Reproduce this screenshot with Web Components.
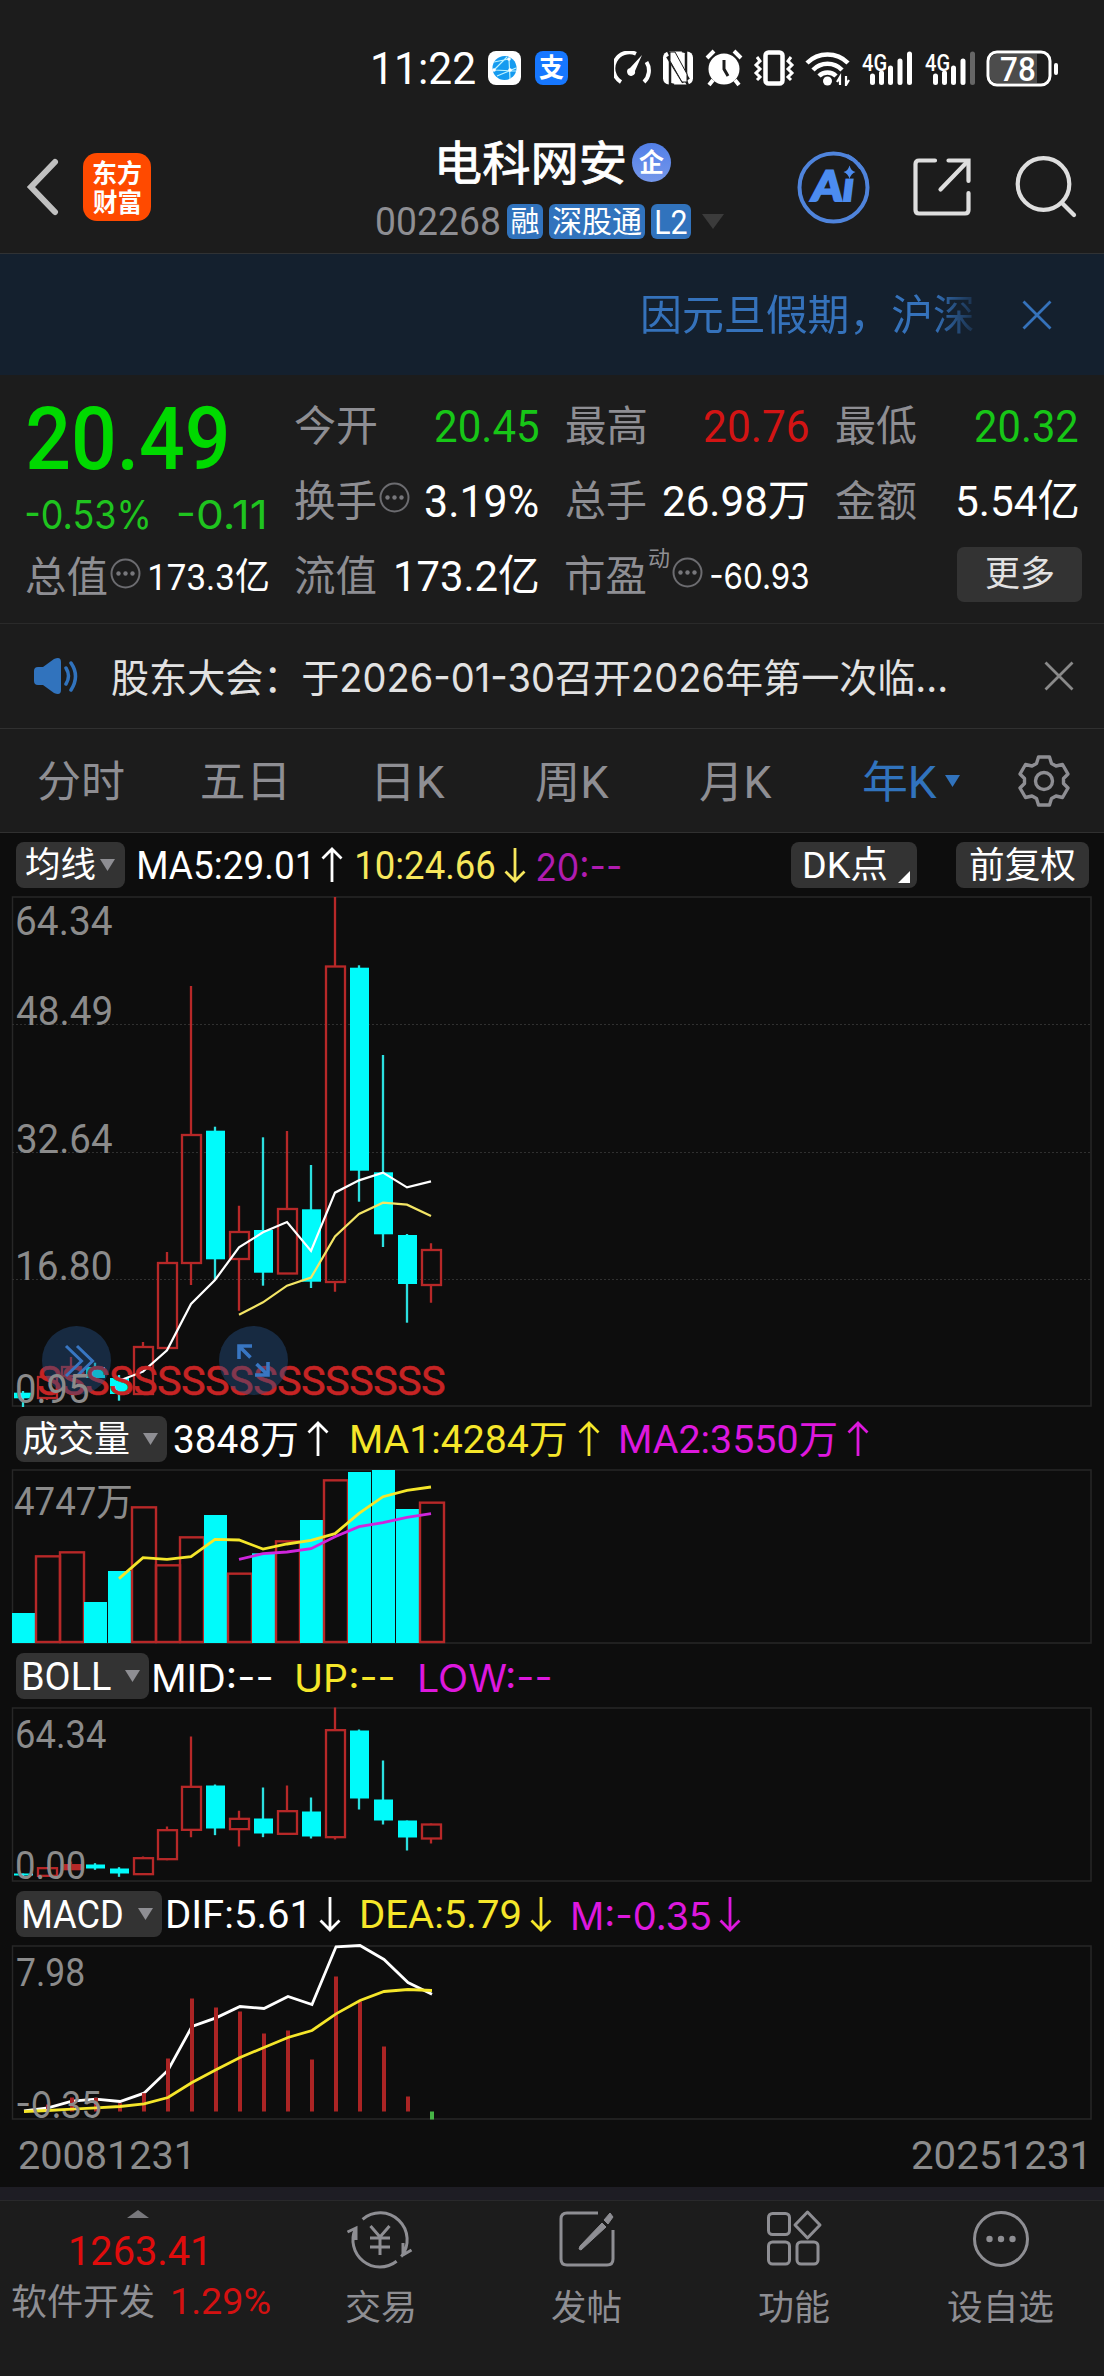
<!DOCTYPE html>
<html lang="zh-CN">
<head>
<meta charset="utf-8">
<title>电科网安 002268</title>
<style>
html,body{margin:0;padding:0;background:#1c1c1c}
body{width:1104px;height:2376px;overflow:hidden;font-family:Roboto,"Noto Sans CJK SC",sans-serif;color:#fff}
</style>
</head>
<body>
<stock-app></stock-app>
<script>
const meter = document.createElement('canvas').getContext('2d');

/* A run of text whose drawn width is given by w, size by s, leading margin by m. */
class FitText extends HTMLElement {
  connectedCallback() {
    if (this.shadowRoot) return;
    const g = (n, d) => this.getAttribute(n) || d;
    const r = this.attachShadow({mode: 'open'});
    const size = g('s', '42'), wt = g('wt', '400'), text = this.textContent;
    const fam = g('f', 'Roboto') + ', "Noto Sans CJK SC", sans-serif';
    meter.font = `${wt} ${size}px ${fam}`;
    const b = meter.measureText(text);
    const ink = b.actualBoundingBoxRight + b.actualBoundingBoxLeft;
    const w = parseFloat(g('w', ink)), k = w / ink;
    r.innerHTML = `<style>:host{display:block;flex:none;width:${w}px;margin-left:${g('m', 0)}px;font:${wt} ${size}px/1 ${fam};white-space:pre;color:${g('c', 'inherit')}}
      span{display:inline-block;vertical-align:top;transform-origin:0 50%;transform:translate(${b.actualBoundingBoxLeft * k}px,var(--dy,1px)) scaleX(${k})}</style><span><slot></slot></span>`;
  }
}
customElements.define('fit-text', FitText);

const define = (name, html) => customElements.define(name, class extends HTMLElement {
  connectedCallback() {
    if (this.shadowRoot) return;
    this.attachShadow({mode: 'open'}).innerHTML = typeof html === 'function' ? html(this) : html;
  }
});

define('arrow-mark', el => `<style>:host{display:block;flex:none;width:22px;height:36px;margin-left:${el.getAttribute('m')}px}svg{display:block}</style>
<svg width="22" height="36" viewBox="0 0 22 36" fill="none" stroke="currentColor" stroke-width="2.8"><path d="${el.hasAttribute('down') ? 'M11 1V34M1.5 24.500L11 34L20.500 24.500' : 'M11 35V2M1.500 11.500L11 2L20.500 11.500'}"/></svg>`);

define('info-dot', `<style>:host{display:block;flex:none;width:31px;height:31px}svg{display:block}</style>
<svg width="31" height="31"><circle cx="15.500" cy="15.500" r="14" fill="none" stroke="#6c6c70" stroke-width="2"/><g fill="#77777b"><circle cx="8.500" cy="15.500" r="2.200"/><circle cx="15.500" cy="15.500" r="2.200"/><circle cx="22.500" cy="15.500" r="2.200"/></g></svg>`);

define('close-mark', el => `<style>:host{display:block;flex:none;width:30px;height:30px;margin-left:${el.getAttribute('m')}px}svg{display:block}</style>
<svg width="30" height="30" stroke="currentColor" stroke-width="2.800"><path d="M1.500 1.500L28.500 28.500M28.500 1.500L1.500 28.500"/></svg>`);

define('status-bar', `<style>:host{display:flex;height:105px;box-sizing:border-box;padding:31px 0 0 373px;align-items:center;--dy:.5px}svg{display:block;flex:none}</style>
<fit-text s="44" w="102.500">11:22</fit-text>
<svg style="margin-left:12.500px" width="33" height="34"><rect width="33" height="34" rx="8" fill="#fff"/><circle cx="16.500" cy="17" r="12" fill="#159bf0"/><path d="M6 11L21 8M21 8L22 28M6 19L28 20M6 19L19 6M9 25L28 17" stroke="#bdf3ff" stroke-width="1.200" fill="none"/><circle cx="21" cy="8" r="1.800" fill="#fff"/><circle cx="6" cy="19" r="1.800" fill="#fff"/><circle cx="22" cy="19" r="1.800" fill="#fff"/></svg>
<div style="margin-left:14px;width:33px;height:34px;border-radius:8px;background:#1677ff;display:flex;align-items:center;justify-content:center;box-sizing:border-box;padding-bottom:3px;flex:none"><fit-text s="26" wt="700" w="25">支</fit-text></div>
<svg style="margin-left:46px" width="37" height="34" fill="none" stroke="#fff"><path d="M7 31A16 16 0 0 1 22 2.800M32.500 11A16 16 0 0 1 30 31" stroke-width="4"/><path d="M28 4L21 20A4 4 0 1 1 16 17Z" fill="#fff" stroke="none"/></svg>
<svg style="margin-left:11px" width="32" height="34" fill="none" stroke="#fff"><rect x="1" y=".500" width="30" height="33" rx="6" fill="#fff" stroke="none"/><path d="M6 0L8 4V33L12 34M26 34L24 30V1L20 0" stroke="#1c1c1c" stroke-width="2.500"/><path d="M8 4L24 30" stroke="#1c1c1c" stroke-width="9"/><path d="M8 1L13 1L25 23V31L20 31L8 10Z" fill="#fff" stroke="#1c1c1c" stroke-width="1"/></svg>
<svg style="margin-left:11px" width="38" height="38" fill="none" stroke="#fff"><circle cx="19" cy="20" r="15.500" fill="#fff" stroke="none"/><path d="M2 9L9 2M36 9L29 2M8 31L4 36M30 31L34 36" stroke-width="4"/><path d="M19 11V20L23 27" stroke="#1c1c1c" stroke-width="3"/></svg>
<svg style="margin-left:10px" width="42" height="36" fill="none" stroke="#fff"><rect x="12.500" y="2.500" width="17" height="31" rx="3" stroke-width="4.500"/><path d="M4 7L7 11L3 15L7 19L3 23L7 27L4 30M38 7L35 11L39 15L35 19L39 23L35 27L38 30" stroke-width="3"/></svg>
<svg style="margin-left:10px" width="46" height="36" fill="none" stroke="#fff" stroke-width="4.500"><path d="M2 13A29 29 0 0 1 43 13M8 20A20 20 0 0 1 37 20M14 26A12 12 0 0 1 31 26"/><circle cx="22.500" cy="31" r="4.500" fill="#fff" stroke="none"/><path d="M32 32L35 27V35M41 26V35L44 30" stroke-width="2.200"/></svg>
${[0, 1].map(k => `<div style="margin-left:${k ? 12 : 11}px;width:51px;height:36px;flex:none;display:flex;position:relative"><fit-text s="24" wt="500" w="24">4G</fit-text><svg style="position:absolute;left:0;top:0" width="51" height="36" stroke="#fff" stroke-width="5" stroke-linecap="round"><path d="M10.500 26V32.500M19.500 23V32.500M28.500 18V32.500M38 11V32.500"/><path d="M47.500 4V32.500" ${k ? 'stroke="#666"' : ''}/></svg></div>`).join('')}
<div style="margin-left:10px;width:73px;height:37px;flex:none;position:relative;display:flex;align-items:center"><svg style="position:absolute;left:0;top:0" width="75" height="37"><rect x="2" y="2" width="62" height="33" rx="9" fill="#1c1c1c" stroke="#fff" stroke-width="3"/><path d="M10 4H51V33H10A6 6 0 0 1 4 27V10A6 6 0 0 1 10 4" fill="#4c4c4c"/><rect x="68" y="13" width="4" height="12" rx="2" fill="#fff"/></svg><fit-text style="position:relative" s="33" wt="500" w="34" m="15">78</fit-text></div>`);

define('app-header', `<style>:host{display:flex;height:149px;box-sizing:border-box;padding:16px 0 0 26px;align-items:center;border-bottom:1px solid #303234;--dy:.5px}
svg{display:block;flex:none}.logo{margin-left:23px;width:68px;height:68px;flex:none;border-radius:14px;background:#ff4a00;display:flex;flex-direction:column;align-items:center;justify-content:center;gap:3px}
.mid{margin:9px 0 0 226px;width:350px;flex:none}.r{display:flex;align-items:center;height:59px}
.ent{margin-left:8px;width:39px;height:39px;border-radius:50%;background:linear-gradient(#527fe8,#7597ea);display:flex;align-items:center;justify-content:center}
.tag{height:35px;border-radius:6px;background:#3173bd;display:flex;align-items:center;justify-content:center;margin-left:6px}</style>
<svg width="34" height="58"><path d="M29 4L5 29L29 54" fill="none" stroke="#c0c0c0" stroke-width="6" stroke-linecap="round"/></svg>
<div class="logo"><fit-text s="26" wt="700" w="48">东方</fit-text><fit-text s="26" wt="700" w="48">财富</fit-text></div>
<div class="mid"><div class="r"><fit-text s="47" w="185" m="62" style="-webkit-text-stroke:.8px #fff">电科网安</fit-text><div class="ent"><fit-text s="26" wt="700" w="25">企</fit-text></div></div>
<div class="r"><fit-text s="39" w="122" c="#8e8e93">002268</fit-text><div class="tag" style="width:36px;margin-left:8px"><fit-text s="29" w="27">融</fit-text></div><div class="tag" style="width:96px"><fit-text s="30" w="89">深股通</fit-text></div><div class="tag" style="width:40px"><fit-text s="33" w="31">L2</fit-text></div><svg style="margin-left:11px" width="22" height="15"><path d="M0 0H22L11 15Z" fill="#3b3b3b"/></svg></div></div>
<svg style="margin-left:69.500px" width="73" height="73"><circle cx="36.500" cy="36.500" r="34" fill="none" stroke="#4f84dc" stroke-width="4"/><text transform="translate(13.500 50) skewX(-7)" textLength="42" lengthAdjust="spacingAndGlyphs" font-family="Lato" font-weight="900" font-size="42" fill="#4c8cf0" stroke="#4c8cf0" stroke-width="2">Ai</text><rect x="42" y="10" width="20" height="17.500" fill="#1c1c1c"/><path d="M52.500 15.500Q54 21 58.500 22Q54 23.500 52.500 29Q51 23.500 46.500 22Q51 21 52.500 15.500Z" fill="#4c8cf0" transform="translate(0 -1)"/><path d="M50 4.700A34 34 0 0 1 64 17" fill="none" stroke="#4f84dc" stroke-width="4"/></svg>
<svg style="margin-left:41px" width="62" height="62" fill="none" stroke="#dedede" stroke-width="4.200"><path d="M24 4.500H8Q4.500 4.500 4.500 8V54Q4.500 57.500 8 57.500H54Q57.500 57.500 57.500 54V37M37.500 4.500H57.500V25" stroke-linecap="round"/><path d="M29.500 33.500L56 6" stroke-linecap="round"/></svg>
<svg style="margin-left:41px" width="66" height="62" fill="none" stroke="#dedede" stroke-width="4.200" stroke-linecap="round"><circle cx="29.500" cy="28" r="25.800"/><path d="M48 47L60 59"/></svg>`);

define('marquee-bar', `<style>:host{display:flex;align-items:center;height:121px;background:#14202e;color:#3572bb;padding-left:643px;box-sizing:border-box}
.t{-webkit-mask-image:linear-gradient(90deg,#000 290px,transparent 342px);mask-image:linear-gradient(90deg,#000 290px,transparent 342px);width:342px}</style>
<div class="t"><fit-text s="42" w="330">因元旦假期，沪深</fit-text></div><close-mark m="37"></close-mark>`);

define('quote-panel', `<style>:host{display:flex;height:249px;box-sizing:border-box;padding-top:12px;border-bottom:1px solid #2a2a2a;--dy:2px}
.c1{width:269px;margin-left:26px;flex:none}.c{width:243px;flex:none}.r{display:flex;align-items:center;height:75px}.c .r{justify-content:space-between}.l{display:flex;align-items:center;color:#8e8e93;gap:3px}
.b{width:125px;height:55px;border-radius:7px;background:#333;display:flex;align-items:center;justify-content:center;margin-right:-4px;--dy:0px}</style>
<div class="c1"><div class="r" style="height:100px"><fit-text s="88" wt="500" w="198" m="2" c="#00d900">20.49</fit-text></div>
<div class="r" style="height:51px;color:#1fc41f"><fit-text s="40" f="Inter" w="122" m="0">-0.53%</fit-text><fit-text s="40" f="Inter" w="86" m="30">-0.11</fit-text></div>
<div class="r"><span class="l"><fit-text w="81">总值</fit-text><info-dot style="margin-bottom:4px"></info-dot></span><fit-text s="37" w="118" m="9">173.3亿</fit-text></div></div>
<div class="c"><div class="r"><span class="l"><fit-text w="81">今开</fit-text></span><fit-text s="44" w="102" c="#17c617">20.45</fit-text></div>
<div class="r"><span class="l"><fit-text w="81">换手</fit-text><info-dot style="margin-bottom:4px"></info-dot></span><fit-text s="44" w="112">3.19%</fit-text></div>
<div class="r"><span class="l"><fit-text w="81">流值</fit-text></span><fit-text s="43" w="142">173.2亿</fit-text></div></div>
<div class="c" style="margin-left:28px;width:242px"><div class="r"><span class="l"><fit-text w="80">最高</fit-text></span><fit-text s="44" w="103" c="#d31414">20.76</fit-text></div>
<div class="r"><span class="l"><fit-text w="80">总手</fit-text></span><fit-text s="43" w="145">26.98万</fit-text></div>
<div class="r"><span class="l"><fit-text w="80">市盈</fit-text><fit-text s="22" w="20" style="margin-bottom:36px">动</fit-text><info-dot style="margin-bottom:4px"></info-dot></span><fit-text s="35" f="Inter" w="97">-60.93</fit-text></div></div>
<div class="c" style="margin-left:28px;width:242px"><div class="r"><span class="l"><fit-text w="80">最低</fit-text></span><fit-text s="44" w="102" c="#17c617">20.32</fit-text></div>
<div class="r"><span class="l"><fit-text w="80">金额</fit-text></span><fit-text s="43" w="120">5.54亿</fit-text></div>
<div class="r"><span></span><div class="b"><fit-text s="35" w="68" c="#e2e2e2">更多</fit-text></div></div></div>`);

define('news-bar', `<style>:host{display:flex;height:105px;box-sizing:border-box;align-items:center;border-bottom:1px solid #303030;padding-left:33px;color:#e2e2e2}svg{display:block;flex:none}</style>
<svg width="46" height="38"><path d="M1 14Q1 10 5 10H10L21 2Q28 -1 28 5V33Q28 39 21 36L10 28H5Q1 28 1 24Z" fill="#3173bd"/><path d="M33 11Q38 19 33 27M38 6Q47 19 38 33" fill="none" stroke="#3173bd" stroke-width="3.500" stroke-linecap="round"/></svg>
<fit-text s="39" f="Inter" w="834" m="33">股东大会：于2026-01-30召开2026年第一次临...</fit-text><close-mark m="98" style="color:#8a8a8a"></close-mark>`);

define('period-tabs', `<style>:host{display:flex;height:104px;box-sizing:border-box;align-items:center;border-bottom:1px solid #303030;color:#8e8e93;--dy:2px}svg{display:block;flex:none}</style>
<fit-text s="43" w="86" m="38">分时</fit-text><fit-text s="43" w="82" m="78">五日</fit-text><fit-text s="44" w="68" m="93">日K</fit-text><fit-text s="44" w="73" m="91">周K</fit-text><fit-text s="44" w="72" m="91">月K</fit-text><fit-text s="44" w="73" m="92" c="#3173bd">年K</fit-text>
<svg style="margin-left:8px" width="15" height="12"><path d="M0 0H15L7.500 12Z" fill="#3173bd"/></svg>
<svg style="margin-left:57px" width="54" height="54" viewBox="-27 -27 54 54" fill="none" stroke="#8e8e93" stroke-width="3.400" stroke-linejoin="round"><path d="M-5.500 -24H5.500L7.500 -17.500L12 -15L18.500 -16.500L24 -7L19.500 -2.500V2.500L24 7L18.500 16.500L12 15L7.500 17.500L5.500 24H-5.500L-7.500 17.500L-12 15L-18.500 16.500L-24 7L-19.500 2.500V-2.500L-24 -7L-18.500 -16.500L-12 -15L-7.500 -17.500Z"/><circle r="8.500"/></svg>`);

define('pick-button', el => `<style>:host{display:flex;flex:none;align-items:center;width:${el.getAttribute('w')}px;height:46px;box-sizing:border-box;margin-left:${el.getAttribute('m')}px;padding-left:${el.getAttribute('p')}px;border-radius:8px;background:#333}svg{display:block;margin-left:${el.getAttribute('g')}px}</style><slot></slot>${el.hasAttribute('g') ? '<svg width="15" height="12"><path d="M0 0H15L7.500 12Z" fill="#8e8e93"/></svg>' : ''}`);

const RED = '#b72828', CY = '#00fbfb', WT = '#fff', YL = '#f5e62a', MG = '#dd18dd';
const cx = i => 23 + 24 * i - 12;
/* Rows: kind, body top, body bottom, wick top, wick bottom. */
const candles = (rows) => rows.map((r, i) => {
  const x = cx(i), [k, a, b, t, u] = r;
  return k === 'c'
    ? `<path d="M${x} ${t}V${u}" stroke="#2be0e0" stroke-width="2.300"/><rect x="${x - 9}" y="${a}" width="19" height="${b - a}" fill="${CY}"/>`
    : `<path d="M${x} ${t}V${a}M${x} ${b}V${u}" stroke="${RED}" stroke-width="2.300"/><rect x="${x - 9}" y="${a}" width="19" height="${b - a}" fill="none" stroke="${RED}" stroke-width="2.300"/>`;
}).join('');
const line = (start, ys, dx, c, w) => `<polyline fill="none" stroke="${c}" stroke-width="${w}" points="${ys.map((y, j) => (cx(start + j) + dx) + ',' + y).join(' ')}"/>`;
const shift = (o, rows) => rows.map(r => [r[0], ...r.slice(1).map(v => v - o)]);
const z = (o, ys) => ys.map(v => o + v / 3);

const frame = (h, inner, labels) => `<style>:host{display:block;position:relative;width:1080px;height:${h}px;margin-left:12px;box-sizing:border-box;--dy:2px}svg{display:block;overflow:visible}
.l{position:absolute;left:0;top:0;color:#8b8b8b}.l fit-text{position:absolute;transform:translateY(-50%)}</style>
<svg width="1080" height="${h}"><rect x=".500" y="1" width="1078.500" height="${h - 2}" fill="none" stroke="#272727" stroke-width="1.500"/>${inner}</svg><div class="l">${labels}</div>`;
const lab = (x, y, w, t, s = 40, f = 'Roboto') => `<fit-text style="left:${x}px;top:${y}px" s="${s}" f="${f}" w="${w}">${t}</fit-text>`;

define('price-chart', () => frame(511,
  `<g stroke="#303030" stroke-width="1" stroke-dasharray="2 2"><path d="M0 128.500H1079M0 256.500H1079M0 383.500H1079"/></g>` +
  candles(shift(896, [
    ['c', 1392.7, 1398.3, 1391, 1407], ['r', 1377, 1398, 1376, 1400], ['r', 1367, 1376, 1357, 1376], ['c', 1367, 1378, 1362.7, 1378], ['c', 1378, 1394, 1375, 1400.7],
    ['r', 1347, 1394, 1342, 1394], ['r', 1263, 1348, 1252, 1350], ['r', 1135, 1263, 986, 1285], ['c', 1130.7, 1259.3, 1126.7, 1280], ['r', 1232, 1259, 1205.7, 1310.7],
    ['c', 1230, 1272.7, 1137.3, 1285.7], ['r', 1209, 1273.5, 1131, 1273.5], ['c', 1209.3, 1281.7, 1165, 1288], ['r', 966.5, 1282, 897, 1291.7], ['c', 967.7, 1170.7, 965.3, 1201.7],
    ['c', 1172.3, 1234.3, 1055, 1247], ['c', 1235, 1284, 1234, 1322.7], ['r', 1250, 1285, 1243.3, 1302.7]])) +
  line(4, z(274, [632, 605, 541, 402, 330, 232, 187, 156, 243, 68, 31, 8, 52, 34]), 0, WT, 2.2) +
  line(9, z(274, [434, 397, 347, 323, 199, 132, 98, 104, 138]), 0, '#f3e565', 2.2) +
  `<text y="498.500" font-family="Roboto" font-size="41" fill="#c62424" text-anchor="middle" stroke="#c62424" stroke-width=".600">${Array.from({length: 17}, (_, i) => `<tspan x="${37.3 + 24 * i}">S</tspan>`).join('')}</text>
  <g fill="rgba(38,83,138,.42)"><circle cx="64.500" cy="464.500" r="34.500"/><circle cx="241.500" cy="464.500" r="34.500"/></g>
  <g fill="none" stroke="#3876c2" stroke-width="3"><path d="M54 450L69.500 465L54 480M65 450L80.500 465L65 480"/><path stroke-width="3.600" d="M227 463V450H240M227 450L238.500 461.500M256 466V479H243M256 479L244.500 468"/></g>`,
  lab(4.5, 24, 95, '64.34') + lab(4.5, 114, 94, '48.49') + lab(4.5, 241.5, 95, '32.64') + lab(6, 369, 93, '16.80') + lab(4.5, 492, 71, '0.95')));

define('volume-chart', () => {
  const v = [['c', 459], ['r', 289], ['r', 277], ['c', 426], ['c', 333], ['r', 142], ['r', 316], ['r', 232], ['c', 165], ['r', 341], ['c', 280], ['r', 244], ['c', 180], ['r', 61], ['c', 36], ['c', 30], ['c', 147], ['r', 128]];
  return frame(175, v.map(([k, t], i) => {
    const x = 24 * i, y = t / 3 - 9;
    return k === 'c' ? `<rect x="${x}" y="${y}" width="23" height="${174 - y}" fill="${CY}"/>` : `<rect x="${x}" y="${y}" width="24" height="${173 - y}" fill="none" stroke="${RED}" stroke-width="2.400"/>`;
  }).join('') + line(4, z(-9, [356, 293, 298, 290, 238, 240, 267, 252, 241, 221, 160, 110, 91, 81]), 0, YL, 2.8) + line(9, z(-9, [298, 281, 276, 266, 230, 200, 188, 172, 161]), 0, '#cf25dd', 2.8),
    lab(2, 30.5, 117, '4747万', 38));
});

define('boll-chart', () => frame(175, candles([
  ['c', 672, 678, 672, 685], ['r', 656, 679, 656, 679], ['r', 647, 659, 636, 661], ['c', 645, 657, 641, 661], ['c', 657, 672, 653, 682], ['r', 626, 674, 621, 674],
  ['r', 542, 629, 531, 632], ['r', 412, 541, 261, 563], ['c', 408, 537, 405, 557], ['r', 508, 539, 484, 591], ['c', 507, 552, 414, 563], ['r', 485, 553, 408, 553],
  ['c', 486, 561, 444, 567], ['r', 242, 563, 174, 570], ['c', 243, 447, 240, 480], ['c', 450, 513, 333, 525], ['c', 513, 564, 513, 603], ['r', 525, 567, 522, 582]
].map(r => [r[0], ...r.slice(1).map(q => q / 3 - 57.5)])) + `<rect x="50" y="159" width="18" height="3" fill="${RED}"/>`, lab(4.5, 25.5, 89, '64.34', 38) + lab(4.5, 156.5, 68, '0.00', 38)));

define('macd-chart', () => {
  const t = [660, 645, 624, 625, 641, 611, 507, 327, 354, 366, 432, 423, 510, 261, 336, 471, 621];
  const o = -55.5;
  return frame(175, line(0, z(o, [664, 655, 635, 629, 636, 611, 542, 411, 385, 351, 357, 321, 345, 172, 168, 210, 279, 314]), 1, WT, 2.8) +
    t.map((y, i) => i ? `<rect x="${24 * i + 10}" y="${y / 3 + o}" width="4" height="${(666 - y) / 3}" fill="#ab2424"/>` : '').join('') +
    line(0, z(o, [666, 663, 659, 655, 651, 643, 624, 579, 541, 504, 474, 444, 423, 373, 333, 306, 300, 303]), 1, YL, 2.8) +
    `<rect x="418" y="${666 / 3 + o}" width="4" height="8" fill="#46b446"/>`, lab(4.5, 26, 67, '7.98', 38) + lab(5, 157, 84, '-0.35', 37, 'Inter'));
});

define('chart-area', `<style>:host{display:block;height:1354px;background:#0d0d0d;--dy:1.5px}.r{display:flex;align-items:center;height:63px;box-sizing:border-box;white-space:nowrap}.corner{display:block;margin:24px 0 0 11px}pick-button{--dy:.5px}</style>
<div class="r"><pick-button m="16" w="109" p="10" g="5"><fit-text s="35" w="69">均线</fit-text></pick-button><fit-text s="39" w="169" m="14">MA5:29.01</fit-text><arrow-mark m="13"></arrow-mark><fit-text s="39" w="138" m="14" c="#f7e75c">10:24.66</fit-text><arrow-mark m="9" down style="color:#f7e75c"></arrow-mark><fit-text s="38" f="Inter" w="83" m="11" c="#b01cb0">20:--</fit-text>
<pick-button m="171" w="126" p="14"><fit-text s="37" w="82">DK点</fit-text><svg class="corner" width="12" height="12"><path d="M12 0V12H0Z" fill="#fff"/></svg></pick-button><pick-button m="39" w="133" p="14"><fit-text s="36" w="105">前复权</fit-text></pick-button></div>
<price-chart></price-chart>
<div class="r"><pick-button m="16" w="151" p="7" g="14"><fit-text s="36" w="106">成交量</fit-text></pick-button><fit-text s="39" w="123" m="7">3848万</fit-text><arrow-mark m="10"></arrow-mark><fit-text s="39" w="214" m="23" c="${YL}">MA1:4284万</fit-text><arrow-mark m="12" style="color:${YL}"></arrow-mark><fit-text s="39" w="215" m="21" c="${MG}">MA2:3550万</fit-text><arrow-mark m="11" style="color:${MG}"></arrow-mark></div>
<volume-chart style="margin-top:-1px"></volume-chart>
<div class="r"><pick-button m="16" w="133" p="8" g="14"><fit-text s="38" w="87">BOLL</fit-text></pick-button><fit-text s="38" f="Inter" w="117" m="5">MID:--</fit-text><fit-text s="38" f="Inter" w="96" m="26" c="${YL}">UP:--</fit-text><fit-text s="38" f="Inter" w="130" m="27" c="${MG}">LOW:--</fit-text></div>
<boll-chart></boll-chart>
<div class="r"><pick-button m="16" w="146" p="8" g="16"><fit-text s="38" w="98">MACD</fit-text></pick-button><fit-text s="39" w="136" m="6">DIF:5.61</fit-text><arrow-mark m="15" down></arrow-mark><fit-text s="39" w="158" m="21" c="${YL}">DEA:5.79</fit-text><arrow-mark m="10" down style="color:${YL}"></arrow-mark><fit-text s="38" f="Inter" w="137" m="21" c="${MG}">M:-0.35</fit-text><arrow-mark m="9" down style="color:${MG}"></arrow-mark></div>
<macd-chart></macd-chart>
<div class="r" style="height:67px;justify-content:space-between;padding:2px 20px 0 19px;color:#8b8b8b"><fit-text s="39" w="169">20081231</fit-text><fit-text s="39" w="172">20251231</fit-text></div>`);

define('nav-item', el => `<style>:host{display:flex;flex-direction:column;align-items:center;width:207px;flex:none;color:#8e8e93;padding-top:7px;box-sizing:border-box;gap:18px}svg{display:block;overflow:visible}</style>
<svg width="70" height="64" viewBox="0 0 70 64" fill="none" stroke="#8e8e93" stroke-width="3">${{
  trade: '<path d="M17.600 11.300A27 27 0 0 1 56.300 48.600M51.600 53.300A27 27 0 0 1 10.500 20.600M2.500 24L11 20V32M66.500 42L58 47V35"/><path d="M25.500 18L35 29L44.500 18M35 29V47M25 30H45M25 39H45"/>',
  post: '<path d="M46 5H15Q9 5 9 11V51Q9 57 15 57H55Q61 57 61 51V22"/><path d="M52 12L58 5L61 9L56 16ZM50 15L54 19L29 42L27 41L28 38Z" fill="#8e8e93" stroke-width="1"/>',
  func: '<rect x="9.500" y="5.500" width="21" height="21" rx="4"/><rect x="9.500" y="34" width="21" height="22" rx="4"/><rect x="38" y="34" width="21" height="22" rx="4"/><path d="M48.500 4L61 17L48.500 30L36 17Z" stroke-linejoin="round"/>',
  more: '<circle cx="35" cy="31" r="26.500"/><g fill="#8e8e93" stroke="none"><circle cx="23.500" cy="31" r="3.200"/><circle cx="35" cy="31" r="3.200"/><circle cx="46.500" cy="31" r="3.200"/></g>'
}[el.getAttribute('kind')]}</svg><slot></slot>`);

define('bottom-nav', `<style>:host{display:flex;height:189px;box-sizing:border-box;border-top:13px solid #1e1d24;background:#1c1c1c}.i{width:276px;flex:none;display:flex;flex-direction:column;align-items:center;box-sizing:border-box;border-top:1px solid #29292b}.top{display:block;margin-top:9px}.r{display:flex;align-items:center;width:100%;margin-top:12px}.n{display:flex;flex:1;border-top:1px solid #29292b}</style>
<div class="i"><svg class="top" width="22" height="8"><path d="M0 8H22L11 0Z" fill="#78787c"/></svg><fit-text s="40" w="134" style="margin-top:13px" c="#e00c0c">1263.41</fit-text><div class="r"><fit-text s="36" w="142" m="12" c="#8e8e93">软件开发</fit-text><fit-text s="37" w="97" m="19" c="#d31111" style="--dy:0px">1.29%</fit-text></div></div>
<div class="n"><nav-item kind="trade"><fit-text s="35" w="68">交易</fit-text></nav-item><nav-item kind="post"><fit-text s="35" w="69">发帖</fit-text></nav-item><nav-item kind="func"><fit-text s="35" w="70">功能</fit-text></nav-item><nav-item kind="more"><fit-text s="35" w="105">设自选</fit-text></nav-item></div>`);

define('stock-app', `<style>:host{display:block;width:1104px;height:2376px;overflow:hidden;background:#1c1c1c}</style>
<status-bar></status-bar><app-header></app-header><marquee-bar></marquee-bar><quote-panel></quote-panel><news-bar></news-bar><period-tabs></period-tabs><chart-area></chart-area><bottom-nav></bottom-nav>`);
</script>
</body>
</html>
